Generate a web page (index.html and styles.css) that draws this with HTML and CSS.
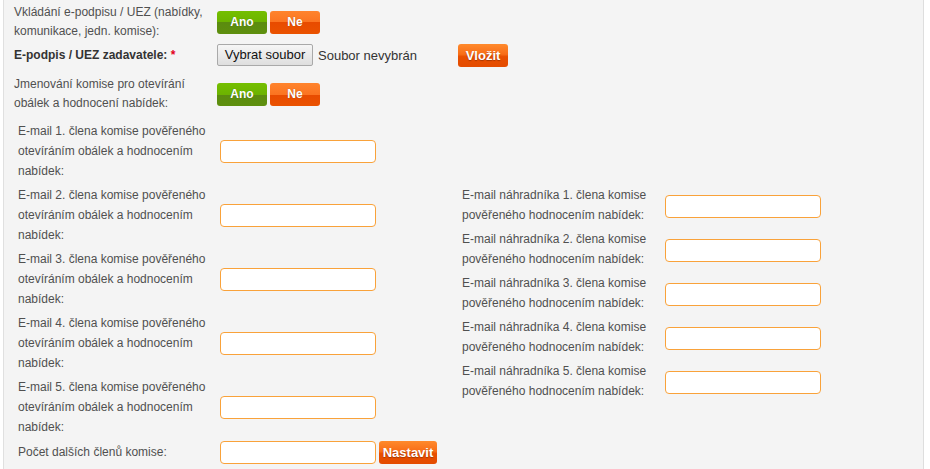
FILE: index.html
```html
<!DOCTYPE html>
<html lang="cs">
<head>
<meta charset="utf-8">
<title>Formulář</title>
<link rel="stylesheet" href="styles.css">
</head>
<body>
<div class="panel">
  <div class="top-row row1">
    <div class="lbl">Vkládání e-podpisu / UEZ (nabídky, komunikace, jedn. komise):</div>
    <div class="toggle"><span class="btn ano">Ano</span><span class="btn ne">Ne</span></div>
  </div>
  <div class="top-row row2">
    <div class="lbl strong">E-podpis / UEZ zadavatele: <span class="req">*</span></div>
    <div class="file"><span class="file-btn">Vybrat soubor</span><span class="file-txt">Soubor nevybrán</span></div>
    <span class="obtn vlozit">Vložit</span>
  </div>
  <div class="top-row row3">
    <div class="lbl">Jmenování komise pro otevírání obálek a hodnocení nabídek:</div>
    <div class="toggle"><span class="btn ano">Ano</span><span class="btn ne">Ne</span></div>
  </div>
  <div class="emails">
    <div class="col-left">
      <div class="erow"><div class="elbl">E-mail 1. člena komise pověřeného otevíráním obálek a hodnocením nabídek:</div><span class="inp"></span></div>
      <div class="erow"><div class="elbl">E-mail 2. člena komise pověřeného otevíráním obálek a hodnocením nabídek:</div><span class="inp"></span></div>
      <div class="erow"><div class="elbl">E-mail 3. člena komise pověřeného otevíráním obálek a hodnocením nabídek:</div><span class="inp"></span></div>
      <div class="erow"><div class="elbl">E-mail 4. člena komise pověřeného otevíráním obálek a hodnocením nabídek:</div><span class="inp"></span></div>
      <div class="erow"><div class="elbl">E-mail 5. člena komise pověřeného otevíráním obálek a hodnocením nabídek:</div><span class="inp"></span></div>
      <div class="erow last"><div class="elbl">Počet dalších členů komise:</div><span class="inp"></span><span class="obtn nastavit">Nastavit</span></div>
    </div>
    <div class="col-right">
      <div class="rrow"><div class="rlbl">E-mail náhradníka 1. člena komise pověřeného hodnocením nabídek:</div><span class="inp"></span></div>
      <div class="rrow"><div class="rlbl">E-mail náhradníka 2. člena komise pověřeného hodnocením nabídek:</div><span class="inp"></span></div>
      <div class="rrow"><div class="rlbl">E-mail náhradníka 3. člena komise pověřeného hodnocením nabídek:</div><span class="inp"></span></div>
      <div class="rrow"><div class="rlbl">E-mail náhradníka 4. člena komise pověřeného hodnocením nabídek:</div><span class="inp"></span></div>
      <div class="rrow"><div class="rlbl">E-mail náhradníka 5. člena komise pověřeného hodnocením nabídek:</div><span class="inp"></span></div>
    </div>
  </div>
</div>
</body>
</html>
```
FILE: styles.css
```css
html, body {
  margin: 0;
  padding: 0;
  background: #ffffff;
}
body {
  font-family: "Liberation Sans", Arial, sans-serif;
  font-size: 12px;
  color: #505050;
}
.panel {
  margin-left: 3px;
  width: 921px;
  min-height: 469px;
  box-sizing: border-box;
  background: #f4f4f4;
  border-left: 1px solid #e0e0e0;
  border-right: 1px solid #dedede;
  padding-top: 3px;
}
.top-row {
  display: flex;
  align-items: center;
  padding-left: 10px;
}
.lbl {
  width: 203px;
  line-height: 19px;
}
.row1 { height: 38px; }
.row2 { height: 24px; margin-top: 2px; align-items: flex-start; }
.row2 .lbl { line-height: 24px; }
.row3 { height: 38px; margin-top: 8px; }
.strong {
  font-weight: bold;
  color: #333;
}
.req { color: #e3001b; }
.toggle {
  display: flex;
  gap: 3px;
}
.btn {
  display: inline-block;
  width: 50px;
  height: 23px;
  line-height: 23px;
  text-align: center;
  color: #fff;
  font-weight: bold;
  font-size: 12px;
  border-radius: 3px;
  text-shadow: 0 0 1px rgba(0,0,0,0.35);
}
.ano {
  background: linear-gradient(#74bf00 0%, #6cb300 50%, #5b8c0f 50%, #5e8f0e 100%);
}
.ne {
  background: linear-gradient(#ff842d 0%, #fb7421 50%, #e84b00 50%, #ea5200 100%);
}
.file {
  width: 241px;
  display: flex;
  align-items: center;
  margin-top: 1px;
}
.file-btn {
  display: inline-block;
  height: 20px;
  line-height: 20px;
  width: 94px;
  text-align: center;
  border: 1px solid #a9a9a9;
  border-radius: 2px;
  background: linear-gradient(#f6f6f6, #dedede);
  color: #111;
  font-size: 13px;
}
.file-txt {
  margin-left: 5px;
  font-size: 13px;
  color: #333;
}
.obtn {
  display: inline-block;
  height: 23px;
  line-height: 23px;
  text-align: center;
  color: #fff;
  font-weight: bold;
  font-size: 13px;
  border-radius: 3px;
  background: linear-gradient(#ff8a2c 0%, #f86d17 45%, #e84f00 55%, #e44c00 100%);
  text-shadow: 0 1px 1px rgba(120,40,0,0.6);
}
.vlozit {
  width: 50px;
  margin-top: 1px;
}
.nastavit {
  width: 58px;
  margin-left: 3px;
}
.emails {
  display: flex;
  margin-top: 8px;
}
.col-left {
  width: 444px;
  padding-left: 14px;
}
.erow {
  display: flex;
  align-items: center;
  margin-bottom: 4px;
}
.elbl {
  width: 202px;
  line-height: 20px;
}
.erow.last .elbl { line-height: 23px; }
.inp {
  display: inline-block;
  width: 154px;
  height: 21px;
  background: #fff;
  border: 1px solid #f9a23a;
  border-radius: 4px;
}
.col-right {
  padding-top: 64px;
}
.rrow {
  display: flex;
  align-items: center;
  margin-bottom: 4px;
}
.rlbl {
  width: 203px;
  line-height: 20px;
}
.rrow .inp { margin-top: 3px; }
```
